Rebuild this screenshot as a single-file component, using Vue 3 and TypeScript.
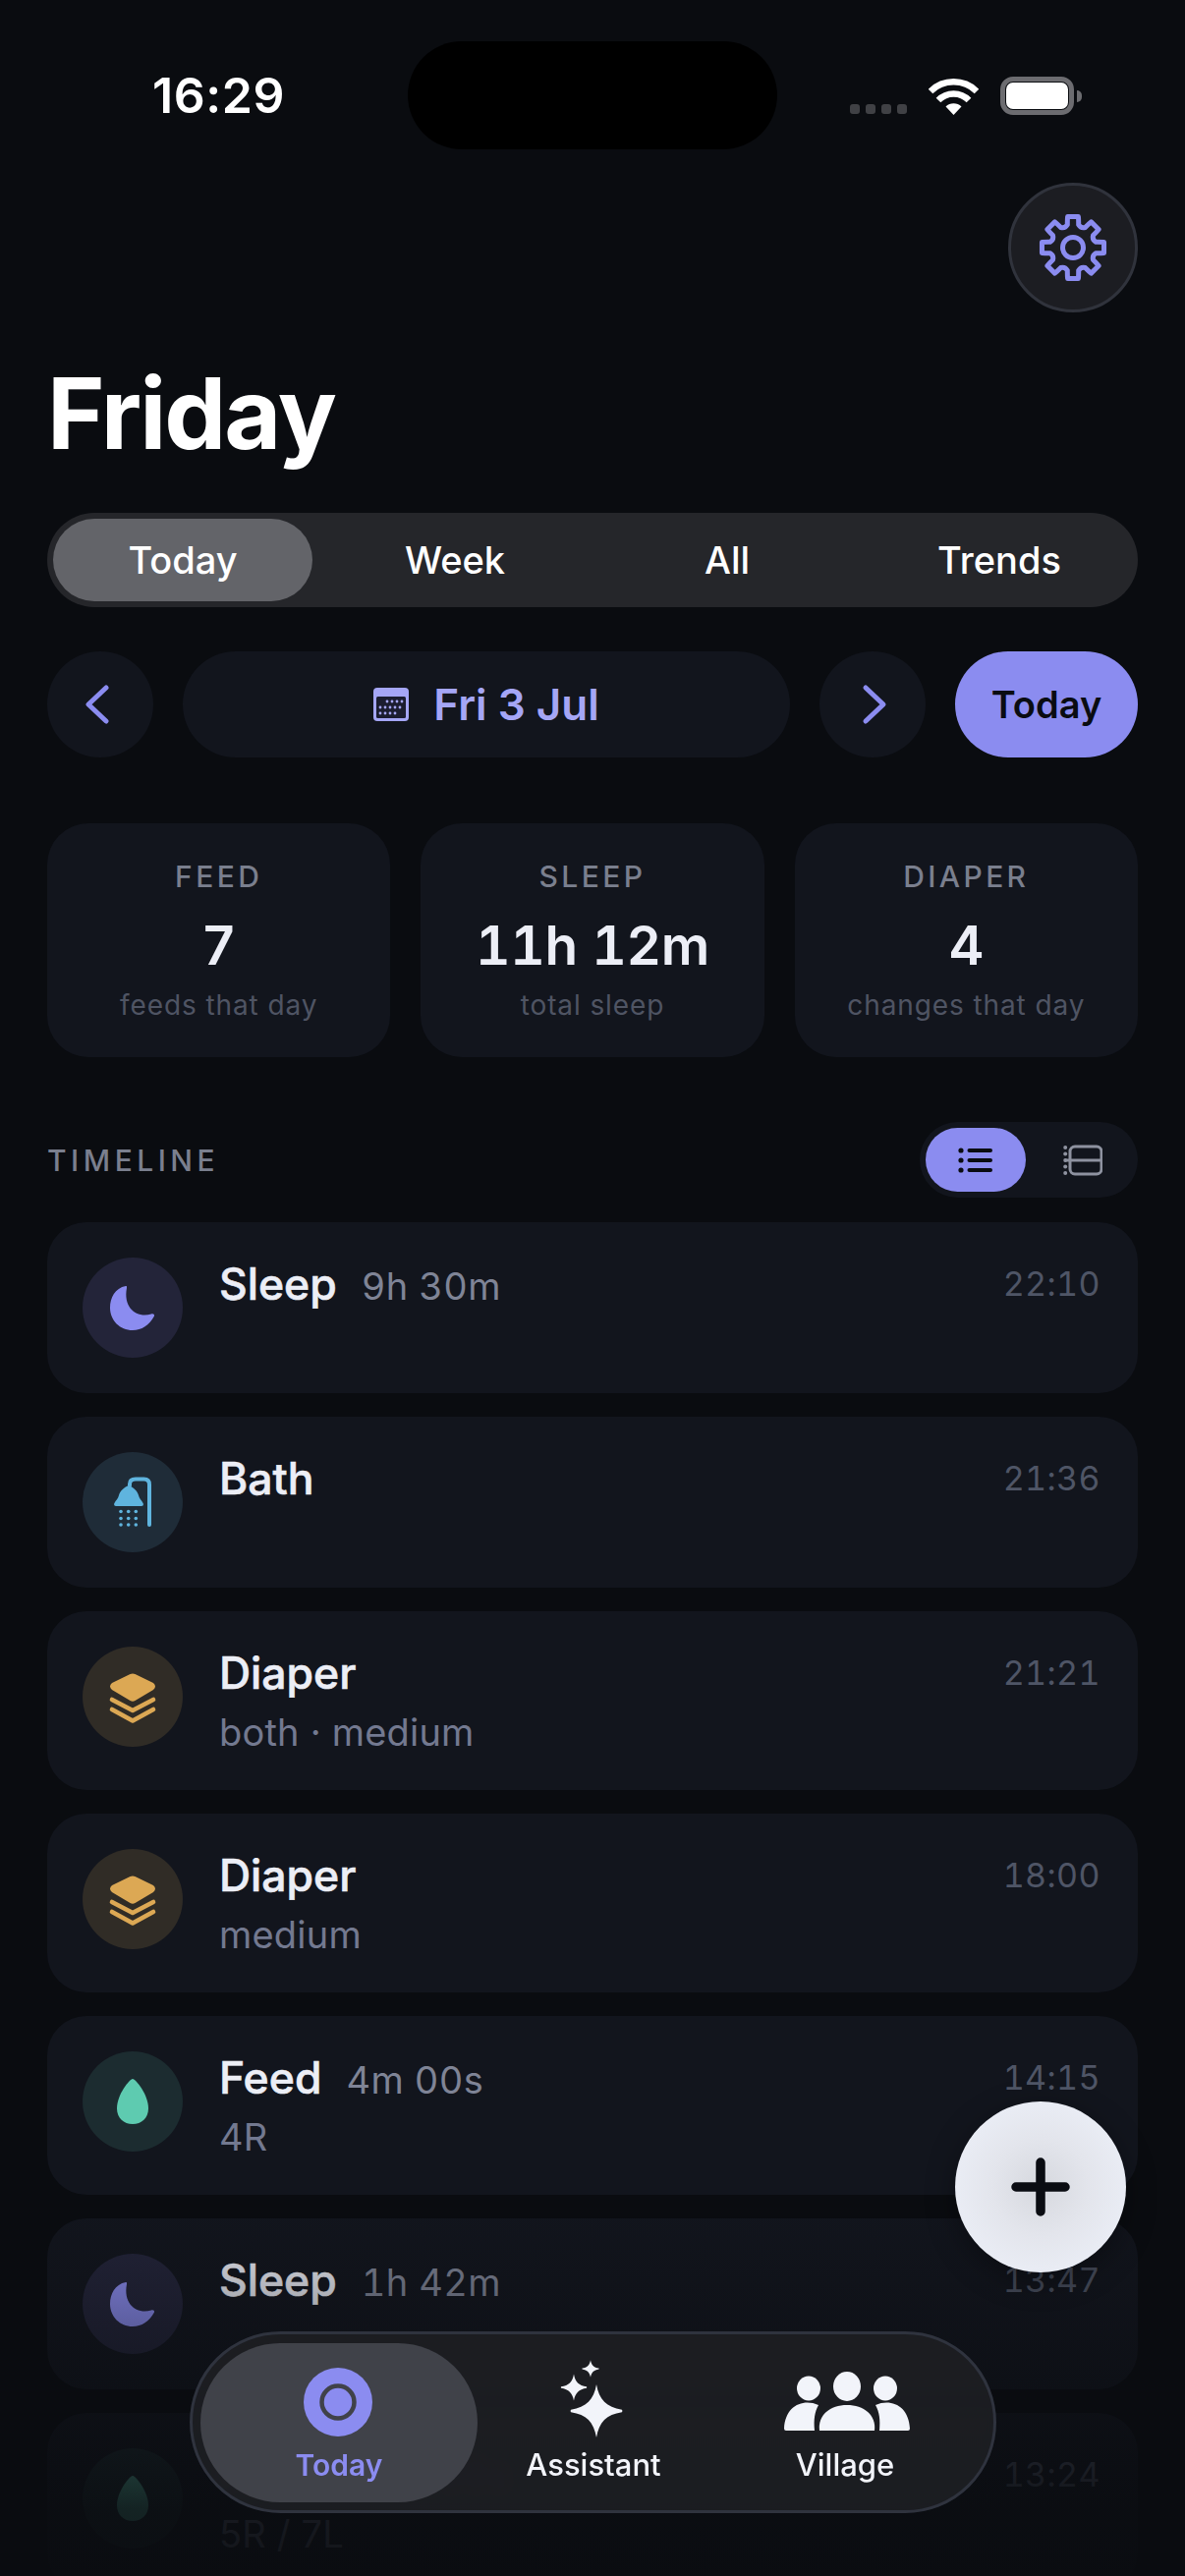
<script setup lang="ts">
type Kind = 'sleep' | 'bath' | 'diaper' | 'feed'
interface Row { kind: Kind; title: string; dur?: string; sub?: string; time: string }

const rows: Row[] = [
  { kind: 'sleep', title: 'Sleep', dur: '9h 30m', time: '22:10' },
  { kind: 'bath', title: 'Bath', time: '21:36' },
  { kind: 'diaper', title: 'Diaper', sub: 'both · medium', time: '21:21' },
  { kind: 'diaper', title: 'Diaper', sub: 'medium', time: '18:00' },
  { kind: 'feed', title: 'Feed', dur: '4m 00s', sub: '4R', time: '14:15' },
  { kind: 'sleep', title: 'Sleep', dur: '1h 42m', time: '13:47' },
  { kind: 'feed', title: 'Feed', dur: '12m 00s', sub: '5R / 7L', time: '13:24' },
]
const stats = [
  { label: 'FEED', value: '7', note: 'feeds that day' },
  { label: 'SLEEP', value: '11h 12m', note: 'total sleep' },
  { label: 'DIAPER', value: '4', note: 'changes that day' },
]
const tabs = ['Today', 'Week', 'All', 'Trends']

function gearPath(): string {
  const c = 40
  const out = 32
  const root = 24
  let d = ''
  for (let i = 0; i < 8; i++) {
    const a = (i * Math.PI) / 4 - Math.PI / 2
    const pt = (r: number, off: number) =>
      `${(c + r * Math.cos(a + off)).toFixed(2)} ${(c + r * Math.sin(a + off)).toFixed(2)}`
    d += `${i === 0 ? 'M' : 'L'}${pt(root, -0.24)} Q${pt(out - 3, -0.2)} ${pt(out, -0.17)} L${pt(out, 0.17)} Q${pt(out - 3, 0.2)} ${pt(root, 0.24)} Q${pt(root - 3, 0.3927)} `
    const b = a + Math.PI / 4
    d += `${(c + root * Math.cos(b - 0.24)).toFixed(2)} ${(c + root * Math.sin(b - 0.24)).toFixed(2)} `
  }
  return d + 'Z'
}
const gear = gearPath()

function star(cx: number, cy: number, r: number): string {
  const p = (x: number, y: number) => `${(cx + x * r).toFixed(2)} ${(cy + y * r).toFixed(2)}`
  return (
    `M${p(0, -1)} C${p(0.1, -0.42)} ${p(0.38, -0.14)} ${p(0.96, -0.05)} ` +
    `Q${p(1, 0)} ${p(0.96, 0.05)} C${p(0.38, 0.14)} ${p(0.1, 0.42)} ${p(0, 1)} ` +
    `C${p(-0.1, 0.42)} ${p(-0.38, 0.14)} ${p(-0.96, 0.05)} ` +
    `Q${p(-1, 0)} ${p(-0.96, -0.05)} C${p(-0.38, -0.14)} ${p(-0.1, -0.42)} ${p(0, -1)} Z`
  )
}
const stars = [star(41, 44, 27), star(18, 20, 13.5), star(35, 1, 8.8)]
</script>

<template>
  <div class="page">
    <div class="status">
      <span class="clock">16:29</span>
      <div class="island"></div>
      <div class="sys">
        <div class="dots"><i></i><i></i><i></i><i></i></div>
        <svg class="wifi" width="51" height="38" viewBox="0 0 51 38">
          <path d="M2 14 A33.5 33.5 0 0 1 49 14" fill="none" stroke="#fff" stroke-width="6.5" />
          <path d="M10 23 A21.5 21.5 0 0 1 41 23" fill="none" stroke="#fff" stroke-width="6.5" />
          <path d="M25.5 38 L17.5 29.5 A11.5 11.5 0 0 1 33.5 29.5 Z" fill="#fff" />
        </svg>
        <div class="battery"><div class="cell"></div></div>
      </div>
    </div>

    <div class="gear-row">
      <button class="gear-btn">
        <svg width="80" height="80" viewBox="0 0 80 80" fill="none" stroke="#8b8cf0" stroke-width="5" stroke-linejoin="round">
          <path :d="gear" />
          <circle cx="40" cy="40" r="10.5" />
        </svg>
      </button>
    </div>

    <h1 class="day">Friday</h1>

    <div class="segment">
      <div v-for="(t, i) in tabs" :key="t" class="seg-tab" :class="{ on: i === 0 }">{{ t }}</div>
    </div>

    <div class="date-row">
      <button class="round">
        <svg width="30" height="44" viewBox="0 0 30 44" fill="none" stroke="#8b8cf0" stroke-width="5" stroke-linecap="round" stroke-linejoin="round"><path d="M21 5 L3 22 L21 39" /></svg>
      </button>
      <div class="date-pill">
        <svg width="36" height="34" viewBox="0 0 36 34">
          <rect width="36" height="34" rx="4" fill="#a5a6f6" />
          <rect x="3" y="9" width="30" height="22" rx="1.5" fill="#1b1d30" />
          <g fill="#a5a6f6">
            <circle v-for="x in [14, 19, 24, 29]" :key="'a' + x" :cx="x" cy="14" r="1.4" />
            <circle v-for="x in [7, 12, 17, 22, 27]" :key="'b' + x" :cx="x" cy="20" r="1.4" />
            <circle v-for="x in [7, 12, 17, 22]" :key="'c' + x" :cx="x" cy="26" r="1.4" />
          </g>
        </svg>
        <span>Fri 3 Jul</span>
      </div>
      <button class="round">
        <svg width="30" height="44" viewBox="0 0 30 44" fill="none" stroke="#8b8cf0" stroke-width="5" stroke-linecap="round" stroke-linejoin="round"><path d="M8 5 L26 22 L8 39" /></svg>
      </button>
      <button class="today-btn">Today</button>
    </div>

    <div class="stats">
      <div v-for="s in stats" :key="s.label" class="stat">
        <div class="stat-label">{{ s.label }}</div>
        <div class="stat-value">{{ s.value }}</div>
        <div class="stat-note">{{ s.note }}</div>
      </div>
    </div>

    <div class="tl-head">
      <span class="tl-title">TIMELINE</span>
      <div class="toggle">
        <div class="tg on">
          <svg width="36" height="30" viewBox="0 0 36 30" fill="#0a0c12">
            <circle cx="3" cy="5" r="2.6" /><circle cx="3" cy="15" r="2.6" /><circle cx="3" cy="25" r="2.6" />
            <rect x="9.5" y="3" width="25.5" height="4" rx="2" /><rect x="9.5" y="13" width="25.5" height="4" rx="2" /><rect x="9.5" y="23" width="25.5" height="4" rx="2" />
          </svg>
        </div>
        <div class="tg">
          <svg width="40" height="32" viewBox="0 0 40 32" fill="#8e92a0">
            <circle cx="2.2" cy="3" r="2" /><circle cx="2.2" cy="9.5" r="2" /><circle cx="2.2" cy="16" r="2" /><circle cx="2.2" cy="22.5" r="2" /><circle cx="2.2" cy="29" r="2" />
            <rect x="7" y="2" width="32" height="28" rx="5" fill="none" stroke="#8e92a0" stroke-width="3" />
            <rect x="1" y="14.5" width="39" height="3" rx="1.5" />
          </svg>
        </div>
      </div>
    </div>

    <div class="rows">
      <div v-for="(r, i) in rows" :key="i" class="row" :class="{ tall: r.sub }">
        <div class="ico" :class="r.kind">
          <svg width="102" height="102" viewBox="0 0 102 102">
            <path v-if="r.kind === 'sleep'" fill="#8b8cf0" d="M44 29 C33 31 28 41 28 51 C28 64 38 74 51 74 C60 74 68 69 73 59.5 C73.5 57.5 71.5 57 70 57.5 C56 62 41 52 45 31 C45.2 29.5 45 29 44 29 Z" />
            <g v-else-if="r.kind === 'bath'" fill="#5fb4de">
              <path d="M48 34 V32.5 Q48 27.5 54 27.5 H62.5 Q68 27.5 68 33 V74" fill="none" stroke="#5fb4de" stroke-width="4" stroke-linecap="round" />
              <path d="M32 53 C33 50 36 48 37 44 C38 40 42 36 47 34 C52 36 56 40 57 44 C58 48 61 50 62 53 Q62 55 60 55 H34 Q32 55 32 53 Z" />
              <template v-for="y in [60.5, 67.5, 74]" :key="y">
                <circle cx="39" :cy="y" r="1.8" /><circle cx="46.7" :cy="y" r="1.8" /><circle cx="54.3" :cy="y" r="1.8" />
              </template>
            </g>
            <g v-else-if="r.kind === 'diaper'" fill="#dca854">
              <path d="M48.5 28 Q51 26.8 53.5 28 L72 37 Q76 40.5 72 44 L53.5 55 Q51 56.5 48.5 55 L30 44 Q26 40.5 30 37 Z" />
              <path d="M30 54 L51 65 L72 54 M30 64 L51 75.5 L72 64" fill="none" stroke="#dca854" stroke-width="4.6" stroke-linecap="round" stroke-linejoin="round" />
            </g>
            <path v-else fill="#5ecbb0" d="M51 28 C54 28 67 44 67 58 C67 68 60 74 51 74 C42 74 35 68 35 58 C35 44 48 28 51 28 Z" />
          </svg>
        </div>
        <div class="body">
          <div class="line1">
            <span class="r-title">{{ r.title }}</span>
            <span v-if="r.dur" class="r-dur">{{ r.dur }}</span>
          </div>
          <div v-if="r.sub" class="r-sub">{{ r.sub }}</div>
        </div>
        <span class="r-time">{{ r.time }}</span>
      </div>
    </div>

    <div class="fade"></div>

    <button class="fab">
      <svg width="60" height="60" viewBox="0 0 60 60" fill="none" stroke="#0a0c12" stroke-width="9.5" stroke-linecap="round"><path d="M30 5 V55 M5 30 H55" /></svg>
    </button>

    <nav class="nav">
      <div class="nav-item on">
        <svg width="70" height="70" viewBox="0 0 70 70">
          <circle cx="35" cy="35" r="35" fill="#8b8cf0" />
          <circle cx="35" cy="35" r="16.5" fill="none" stroke="#404249" stroke-width="4.5" />
        </svg>
        <span>Today</span>
      </div>
      <div class="nav-item">
        <svg width="80" height="80" viewBox="0 0 80 80" fill="#f2f4fa">
          <path v-for="(s, i) in stars" :key="i" :d="s" />
        </svg>
        <span>Assistant</span>
      </div>
      <div class="nav-item">
        <svg width="130" height="70" viewBox="0 0 130 70" fill="#f2f4fa">
          <ellipse cx="26" cy="18" rx="12" ry="12.5" /><ellipse cx="65" cy="16" rx="14" ry="15" /><ellipse cx="104" cy="18" rx="12" ry="12.5" />
          <path d="M36 35 C20 28 2 36 1 59 Q1 61 3 61 H32 C31 50 32 42 36 35 Z" />
          <path d="M37 61 C35 45 48 35 65 35 C82 35 95 45 93 61 Z" />
          <path d="M94 35 C110 28 128 36 129 59 Q129 61 127 61 H98 C99 50 98 42 94 35 Z" />
        </svg>
        <span>Village</span>
      </div>
    </nav>
  </div>
</template>

<style>
html, body { margin: 0; background: #0a0c10; }
</style>

<style scoped>
.page {
  position: relative;
  width: 1206px;
  height: 2622px;
  overflow: hidden;
  background: #0a0c10;
  font-family: Inter, "Noto Sans", sans-serif;
  color: #fff;
}
button { border: 0; padding: 0; font: inherit; color: inherit; cursor: pointer; }

.status { height: 186px; display: flex; position: relative; }
.clock {
  position: absolute; left: 155px; top: 66px;
  font-size: 50px; line-height: 62px; font-weight: 600; letter-spacing: 0.6px;
}
.island {
  position: absolute; left: 415px; top: 42px;
  width: 376px; height: 110px; border-radius: 55px; background: #000;
}
.sys { position: absolute; left: 865px; top: 78px; height: 40px; width: 236px; }
.dots { position: absolute; left: 0; top: 28px; display: flex; gap: 6px; }
.dots i { width: 10px; height: 10px; border-radius: 3px; background: #404145; display: block; }
.wifi { position: absolute; left: 80px; top: 1px; }
.battery {
  position: absolute; left: 153px; top: 0; width: 75px; height: 39px;
  box-sizing: border-box; border: 5px solid #6c6c70; border-radius: 13px;
  padding: 1px;
}
.battery::after {
  content: ""; position: absolute; right: -13px; top: 9px; width: 5px; height: 12px;
  background: #6c6c70; border-radius: 0 5px 5px 0;
}
.cell { width: 100%; height: 100%; background: #fff; border-radius: 7px; }

.gear-row { display: flex; justify-content: flex-end; padding-right: 48px; }
.gear-btn {
  width: 132px; height: 132px; border-radius: 50%; box-sizing: border-box;
  background: #1c1d22; border: 3px solid #30333c;
  display: flex; align-items: center; justify-content: center;
}

.day {
  margin: 43px 0 0 48px; font-size: 100px; line-height: 120px; height: 161px; font-weight: 700;
  letter-spacing: -2px;
}

.segment {
  margin: 0 48px; height: 96px; border-radius: 48px; background: #25262a;
  box-sizing: border-box; padding: 6px; display: flex; gap: 13px;
}
.seg-tab {
  width: 264px; height: 84px; border-radius: 42px;
  display: flex; align-items: center; justify-content: center;
  font-size: 38px; font-weight: 500;
}
.seg-tab.on { background: #636469; }

.date-row { margin: 45px 48px 0; display: flex; gap: 30px; height: 108px; }
.round {
  width: 108px; height: 108px; border-radius: 50%; background: #12151d;
  display: flex; align-items: center; justify-content: center;
}
.date-pill {
  flex: 1; border-radius: 54px; background: #12151d;
  display: flex; align-items: center; justify-content: center; gap: 25px;
  font-size: 44px; font-weight: 600; color: #a5a6f6;
}
.today-btn {
  width: 186px; height: 108px; border-radius: 54px; background: #8b8cf0;
  color: #0a0c12; font-size: 38px; font-weight: 600;
}

.stats { margin: 67px 48px 0; display: grid; grid-template-columns: repeat(3, 1fr); gap: 31px; }
.stat {
  height: 238px; border-radius: 42px; background: #12151d; text-align: center;
  box-sizing: border-box; padding-top: 36px;
}
.stat-label { font-size: 30px; line-height: 36px; font-weight: 500; letter-spacing: 3.4px; color: #7a7f8e; }
.stat-value { margin-top: 17px; font-size: 55px; line-height: 70px; font-weight: 600; color: #eceef6; letter-spacing: -0.3px; font-variant-numeric: tabular-nums; }
.stat-note { margin-top: 7px; font-size: 28px; line-height: 38px; color: #4f5463; letter-spacing: 0.9px; }

.tl-head { margin: 66px 48px 0; height: 77px; display: flex; align-items: center; justify-content: space-between; }
.tl-title { font-size: 30px; font-weight: 500; letter-spacing: 4.5px; color: #7a7f8e; }
.toggle {
  width: 222px; height: 77px; box-sizing: border-box; padding: 6px; border-radius: 39px;
  background: #12151d; display: flex;
}
.tg { width: 102px; height: 65px; border-radius: 33px; display: flex; align-items: center; justify-content: center; }
.tg + .tg { margin-left: 5px; }
.tg + .tg svg { margin-left: 3px; }
.tg.on { background: #8b8cf0; }

.rows { margin: 25px 48px 0; display: flex; flex-direction: column; gap: 24px; }
.row {
  height: 174px; flex: none; box-sizing: border-box; padding: 36px 38px 36px 36px;
  border-radius: 40px; background: #12151d; display: flex; gap: 37px; align-items: flex-start;
}
.row.tall { height: 182px; }
.ico { width: 102px; height: 102px; border-radius: 50%; flex: none; }
.ico svg { display: block; }
.ico.sleep { background: #232439; }
.ico.bath { background: #1f2c38; }
.ico.diaper { background: #302c26; }
.ico.feed { background: #1c2c30; }
.body { flex: 1; min-width: 0; }
.line1 { display: flex; align-items: baseline; gap: 25px; height: 54px; line-height: 54px; }
.r-title { font-size: 44.5px; font-weight: 500; color: #eceef6; -webkit-text-stroke: 0.6px #eceef6; }
.r-dur { font-size: 38px; color: #7f8496; letter-spacing: 0.4px; font-variant-numeric: tabular-nums; }
.r-sub { margin-top: 6px; font-size: 38px; line-height: 54px; color: #737990; letter-spacing: 0.2px; }
.r-time { font-size: 34px; line-height: 54px; color: #4f5566; letter-spacing: 0.4px; font-variant-numeric: tabular-nums; }

.fade {
  position: absolute; left: 0; right: 0; top: 2240px; bottom: 0; pointer-events: none;
  background: linear-gradient(to bottom, rgba(10,12,16,0) 0%, rgba(10,12,16,0.3) 28%, rgba(10,12,16,0.88) 82%, rgba(10,12,16,0.92) 100%);
}
.fab {
  position: absolute; left: 972px; top: 2139px; width: 174px; height: 174px; border-radius: 50%;
  background: radial-gradient(circle at 50% 50%, #d6d8de 0%, #e3e5ec 40%, #e9ecf4 70%);
  box-shadow: 0 8px 30px rgba(0,0,0,.35);
  display: flex; align-items: center; justify-content: center;
}
.nav {
  position: absolute; left: 193px; top: 2373px; width: 821px; height: 185px; box-sizing: border-box;
  border-radius: 93px; border: 3px solid #2f333e;
  background: rgba(29,30,35,0.92);
  backdrop-filter: blur(6px);
  display: flex; padding: 9px 8px;
}
.nav-item {
  width: 282px; height: 162px; flex: none; border-radius: 81px; position: relative;
  font-size: 31px; font-weight: 500; color: #f2f4fa; text-align: center;
}
.nav-item:nth-child(2) { width: 236px; }
.nav-item:nth-child(3) { width: 276px; }
.nav-item.on { background: #404249; color: #8b8cf0; font-weight: 600; font-size: 30px; }
.nav-item svg { position: absolute; overflow: visible; }
.nav-item:nth-child(1) svg { left: 105px; top: 25px; }
.nav-item:nth-child(2) svg { left: 80px; top: 25px; }
.nav-item:nth-child(3) svg { left: 75px; top: 28px; }
.nav-item span { position: absolute; left: 0; right: 0; top: 104px; line-height: 40px; }
</style>
